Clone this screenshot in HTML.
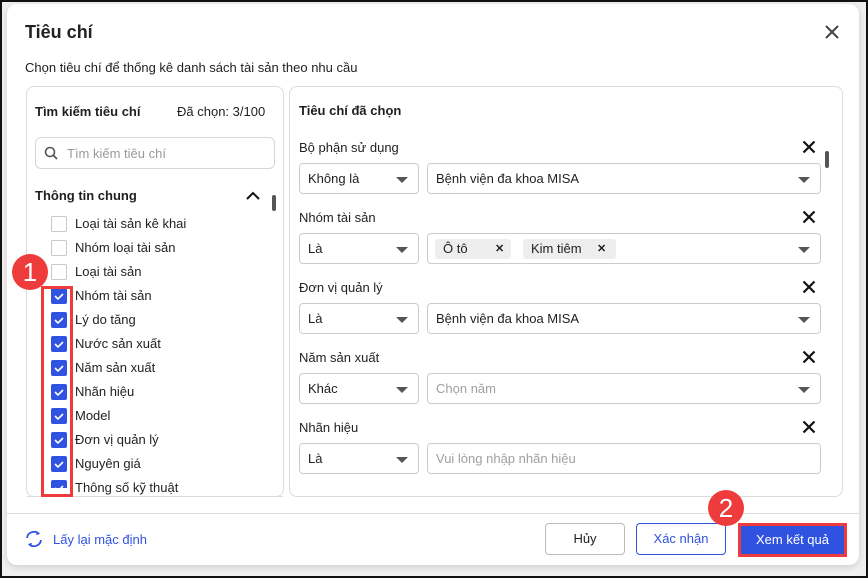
<!DOCTYPE html>
<html><head><meta charset="utf-8"><style>
*{box-sizing:border-box;margin:0;padding:0}
body{width:868px;height:578px;background:#f0f0f0;font-family:"Liberation Sans",sans-serif;color:#1f1f1f;position:relative;overflow:hidden}
.a{position:absolute;white-space:nowrap}
.dlg{left:7px;top:4px;width:852px;height:561px;background:#fff;border-radius:10px;box-shadow:0 2px 8px rgba(0,0,0,.15)}
.panel{border:1px solid #dcdcdc;border-radius:8px;background:#fff}
.cb{width:16px;height:16px;border:1px solid #c8c8c8;border-radius:2px;background:#fff}
.cb.on{background:#2f52e0;border-color:#2f52e0}
.lbl{font-size:13px;color:#222}
.sel{border:1px solid #ccc;border-radius:4px;height:31px;font-size:13px;padding:0 8px;line-height:29px;background:#fff}
.car{position:absolute;right:10px;top:13px;border-left:6px solid transparent;border-right:6px solid transparent;border-top:6px solid #555}
.x{width:14px;height:14px}
.btn{border:1px solid #bbb;border-radius:4px;height:32px;font-size:13px;text-align:center;line-height:30px;background:#fff}
.badge{width:36px;height:36px;border-radius:50%;background:#ee3b3b;color:#fff;font-size:26px;text-align:center;line-height:36px}
.tag{position:absolute;top:5px;height:20px;background:#eeeeee;border-radius:3px;font-size:13px;line-height:20px;padding-left:8px}
</style></head><body>
<div class="a dlg"></div>
<div class="a" style="left:25px;top:22px;font-size:18px;font-weight:bold;color:#222">Tiêu chí</div>
<svg class="a" style="left:825px;top:25px" width="14" height="14"><path d="M1 1L13 13M13 1L1 13" stroke="#444" stroke-width="2"/></svg>
<div class="a" style="left:25px;top:60px;font-size:13px">Chọn tiêu chí để thống kê danh sách tài sản theo nhu cầu</div>

<div class="a panel" style="left:26px;top:86px;width:258px;height:411px"></div>
<div class="a" style="left:35px;top:104px;font-size:13px;font-weight:bold">Tìm kiếm tiêu chí</div>
<div class="a" style="left:177px;top:104px;font-size:13px">Đã chọn: 3/100</div>
<div class="a" style="left:35px;top:137px;width:240px;height:32px;border:1px solid #d6d6d6;border-radius:6px"></div>
<svg class="a" style="left:44px;top:146px" width="14" height="14"><circle cx="6" cy="6" r="4.5" fill="none" stroke="#555" stroke-width="1.6"/><path d="M9.5 9.5L13 13" stroke="#555" stroke-width="1.8"/></svg>
<div class="a" style="left:67px;top:146px;font-size:13px;color:#9a9a9a">Tìm kiếm tiêu chí</div>
<div class="a" style="left:35px;top:188px;font-size:13px;font-weight:bold">Thông tin chung</div>
<svg class="a" style="left:246px;top:191px" width="14" height="9"><path d="M1 8L7 2L13 8" stroke="#111" stroke-width="2" fill="none"/></svg>
<div class="a" style="left:272px;top:195px;width:4px;height:16px;background:#555;border-radius:2px"></div>

<div class="a" style="left:51px;top:216px;width:200px">
<div style="position:relative">
<div class="a cb" style="top:0"></div><div class="a lbl" style="left:24px;top:0">Loại tài sản kê khai</div>
<div class="a cb" style="top:24px"></div><div class="a lbl" style="left:24px;top:24px">Nhóm loại tài sản</div>
<div class="a cb" style="top:48px"></div><div class="a lbl" style="left:24px;top:48px">Loại tài sản</div>
</div></div>
<div class="a" style="left:51px;top:288px;width:200px">
<div style="position:relative">
<div class="a cb on" style="top:0"></div><div class="a lbl" style="left:24px;top:0">Nhóm tài sản</div>
<div class="a cb on" style="top:24px"></div><div class="a lbl" style="left:24px;top:24px">Lý do tăng</div>
<div class="a cb on" style="top:48px"></div><div class="a lbl" style="left:24px;top:48px">Nước sản xuất</div>
<div class="a cb on" style="top:72px"></div><div class="a lbl" style="left:24px;top:72px">Năm sản xuất</div>
<div class="a cb on" style="top:96px"></div><div class="a lbl" style="left:24px;top:96px">Nhãn hiệu</div>
<div class="a cb on" style="top:120px"></div><div class="a lbl" style="left:24px;top:120px">Model</div>
<div class="a cb on" style="top:144px"></div><div class="a lbl" style="left:24px;top:144px">Đơn vị quản lý</div>
<div class="a cb on" style="top:168px"></div><div class="a lbl" style="left:24px;top:168px">Nguyên giá</div>
<div class="a cb on" style="top:192px;height:8px;border-radius:2px 2px 0 0"></div><div class="a lbl" style="left:24px;top:192px">Thông số kỹ thuật</div>
</div></div>
<div class="a" style="left:27px;top:496px;width:256px;height:1px;background:#dcdcdc"></div>
<svg class="a" style="left:51px;top:288px" width="16" height="210">
<g stroke="#fff" stroke-width="1.6" fill="none">
<path d="M4 8l3 3 5-5"/><path d="M4 32l3 3 5-5"/><path d="M4 56l3 3 5-5"/><path d="M4 80l3 3 5-5"/><path d="M4 104l3 3 5-5"/><path d="M4 128l3 3 5-5"/><path d="M4 152l3 3 5-5"/><path d="M4 176l3 3 5-5"/><path d="M4 200l3 3 5-5"/></g></svg>
<div class="a" style="left:41px;top:286px;width:32px;height:211px;border:3px solid #ee3b3b"></div>
<div class="a badge" style="left:12px;top:254px">1</div>

<div class="a panel" style="left:289px;top:86px;width:554px;height:411px"></div>
<div class="a" style="left:299px;top:103px;font-size:13px;font-weight:bold">Tiêu chí đã chọn</div>
<div class="a" style="left:825px;top:151px;width:4px;height:17px;background:#555;border-radius:2px"></div>

<div class="a" style="left:299px;top:140px;width:522px;height:360px">
<div style="position:relative">
<div class="a lbl" style="top:0">Bộ phận sử dụng</div><svg class="a x" style="left:503px;top:0" viewBox="0 0 14 14"><path d="M1.5 1.5L12.5 12.5M12.5 1.5L1.5 12.5" stroke="#111" stroke-width="2.2"/></svg>
<div class="a sel" style="top:23px;width:120px">Không là<span class="car"></span></div>
<div class="a sel" style="top:23px;left:128px;width:394px">Bệnh viện đa khoa MISA<span class="car"></span></div>

<div class="a lbl" style="top:70px">Nhóm tài sản</div><svg class="a x" style="left:503px;top:70px" viewBox="0 0 14 14"><path d="M1.5 1.5L12.5 12.5M12.5 1.5L1.5 12.5" stroke="#111" stroke-width="2.2"/></svg>
<div class="a sel" style="top:93px;width:120px">Là<span class="car"></span></div>
<div class="a sel" style="top:93px;left:128px;width:394px"><div class="tag" style="left:7px;width:76px">Ô tô<b style="position:absolute;left:60px;font-size:11px">✕</b></div><div class="tag" style="left:95px;width:93px">Kim tiêm<b style="position:absolute;left:74px;font-size:11px">✕</b></div><span class="car"></span></div>

<div class="a lbl" style="top:140px">Đơn vị quản lý</div><svg class="a x" style="left:503px;top:140px" viewBox="0 0 14 14"><path d="M1.5 1.5L12.5 12.5M12.5 1.5L1.5 12.5" stroke="#111" stroke-width="2.2"/></svg>
<div class="a sel" style="top:163px;width:120px">Là<span class="car"></span></div>
<div class="a sel" style="top:163px;left:128px;width:394px">Bệnh viện đa khoa MISA<span class="car"></span></div>

<div class="a lbl" style="top:210px">Năm sản xuất</div><svg class="a x" style="left:503px;top:210px" viewBox="0 0 14 14"><path d="M1.5 1.5L12.5 12.5M12.5 1.5L1.5 12.5" stroke="#111" stroke-width="2.2"/></svg>
<div class="a sel" style="top:233px;width:120px">Khác<span class="car"></span></div>
<div class="a sel" style="top:233px;left:128px;width:394px;color:#a0a0a0">Chọn năm<span class="car"></span></div>

<div class="a lbl" style="top:280px">Nhãn hiệu</div><svg class="a x" style="left:503px;top:280px" viewBox="0 0 14 14"><path d="M1.5 1.5L12.5 12.5M12.5 1.5L1.5 12.5" stroke="#111" stroke-width="2.2"/></svg>
<div class="a sel" style="top:303px;width:120px">Là<span class="car"></span></div>
<div class="a sel" style="top:303px;left:128px;width:394px;color:#a0a0a0">Vui lòng nhập nhãn hiệu</div>
</div></div>

<div class="a" style="left:7px;top:513px;width:852px;height:1px;background:#ddd"></div>
<svg class="a" style="left:24px;top:530px" width="20" height="18"><path d="M3 8A7 7 0 0 1 15 4M17 10A7 7 0 0 1 5 14" stroke="#2f52e0" stroke-width="1.8" fill="none"/><path d="M13 1l3 3-4 1z M7 17l-3-3 4-1z" fill="#2f52e0"/></svg>
<div class="a" style="left:53px;top:532px;font-size:13px;color:#2f52e0">Lấy lại mặc định</div>
<div class="a btn" style="left:545px;top:523px;width:80px">Hủy</div>
<div class="a btn" style="left:636px;top:523px;width:90px;border-color:#2f52e0;color:#2f52e0">Xác nhận</div>
<div class="a" style="left:738px;top:523px;width:109px;height:34px;border:3px solid #ee3b3b;background:#2f52e0;color:#fff;font-size:13px;text-align:center;line-height:28px">Xem kết quả</div>
<div class="a badge" style="left:708px;top:490px">2</div>
<div class="a" style="left:0;top:0;width:868px;height:578px;border:2px solid #111"></div>
</body></html>
